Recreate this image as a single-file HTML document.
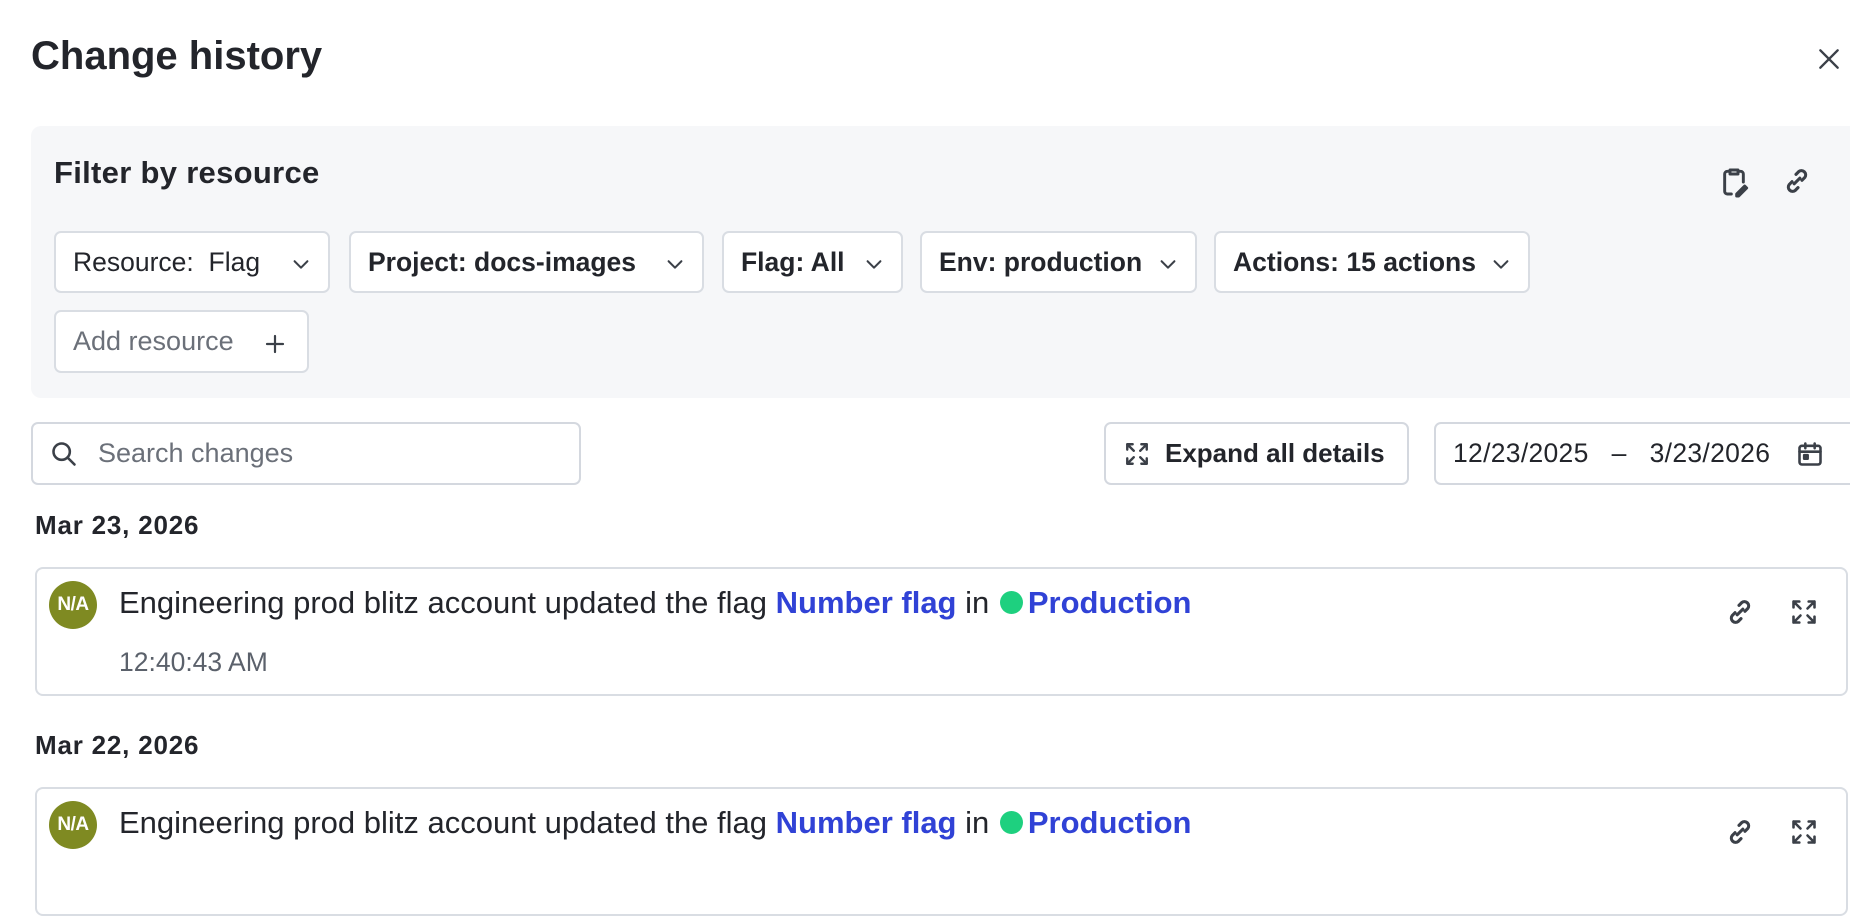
<!DOCTYPE html>
<html><head><meta charset="utf-8"><style>
*{box-sizing:border-box;margin:0;padding:0}
body{width:1850px;height:846px;overflow:hidden;background:#fff;font-family:"Liberation Sans",sans-serif;color:#23252b;position:relative}
.abs{position:absolute}
.title{left:31px;top:34px;font-size:40px;font-weight:600;letter-spacing:0px}
.panel{left:31px;top:126px;width:1840px;height:272px;background:#f6f7f9;border-radius:10px}
.fh{left:54px;top:155px;font-size:31px;font-weight:600;letter-spacing:0.3px}
.chip{position:absolute;top:231px;height:62px;border:2px solid #d9dde3;border-radius:7px;background:#fff;display:flex;align-items:center;padding-left:17px;font-size:26.5px;font-weight:600;color:#23252b}
.chip svg{position:absolute;right:16px;top:20px}
.box{position:absolute;border:2px solid #d4d8df;border-radius:7px;background:#fff;display:flex;align-items:center}
.date{font-size:26px;font-weight:700;left:35px;letter-spacing:0.8px}
.card{position:absolute;left:35px;width:1813px;height:129px;border:2px solid #d9dde3;border-radius:8px;background:#fff}
.av{position:absolute;left:12px;top:12px;width:48px;height:48px;border-radius:50%;background:#7f8a22;color:#fff;font-size:19px;font-weight:700;display:flex;align-items:center;justify-content:center;letter-spacing:-0.5px}
.msg{position:absolute;left:82px;top:16px;font-size:31px;white-space:nowrap}
.msg b{color:#3042d6;font-weight:600}
.dot{display:inline-block;width:23px;height:23px;border-radius:50%;background:#1ed07f;vertical-align:-1px;margin:0 5px 0 2px}
.tm{position:absolute;left:82px;top:78px;font-size:26.5px;color:#5b616b}
.ic{position:absolute;stroke:#3b4048;fill:none;stroke-width:2.2;stroke-linecap:round;stroke-linejoin:round}
</style></head><body>
<div class="abs title">Change history</div>
<svg class="ic" style="left:1816px;top:46px" width="26" height="26" viewBox="0 0 24 24"><path d="M4 4L20 20M20 4L4 20"/></svg>
<div class="abs panel"></div>
<div class="abs fh">Filter by resource</div>
<svg class="ic" style="left:1718px;top:166px" width="32" height="32" viewBox="0 0 24 24"><path d="M9 4H7a2 2 0 0 0-2 2v13a2 2 0 0 0 2 2h3M15 4h2a2 2 0 0 1 2 2v6M9 3h6v3H9zM14 21l6-6 1.5 1.5-6 6H14z"/></svg>
<svg class="ic" style="left:1780px;top:164px" width="34" height="34" viewBox="0 0 24 24"><path d="M10 14l4-4M8.5 12.5l-2 2a3 3 0 0 0 4.2 4.2l2-2M15.5 11.5l2-2a3 3 0 0 0-4.2-4.2l-2 2"/></svg>
<div class="chip" style="left:54px;width:276px;font-weight:400">Resource:&nbsp;&nbsp;Flag<svg class="ic" width="22" height="22" viewBox="0 0 24 24" style="position:absolute"><path d="M5 9l7 7 7-7"/></svg></div>
<div class="chip" style="left:349px;width:355px">Project: docs-images<svg class="ic" width="22" height="22" viewBox="0 0 24 24" style="position:absolute"><path d="M5 9l7 7 7-7"/></svg></div>
<div class="chip" style="left:722px;width:181px">Flag: All<svg class="ic" width="22" height="22" viewBox="0 0 24 24" style="position:absolute"><path d="M5 9l7 7 7-7"/></svg></div>
<div class="chip" style="left:920px;width:277px">Env: production<svg class="ic" width="22" height="22" viewBox="0 0 24 24" style="position:absolute"><path d="M5 9l7 7 7-7"/></svg></div>
<div class="chip" style="left:1214px;width:316px">Actions: 15 actions<svg class="ic" width="22" height="22" viewBox="0 0 24 24" style="position:absolute"><path d="M5 9l7 7 7-7"/></svg></div>
<div class="chip" style="left:54px;top:310px;width:255px;height:63px;font-weight:400;color:#6b7079;font-size:27px">Add resource<svg class="ic" width="24" height="24" viewBox="0 0 24 24" style="position:absolute;right:20px"><path d="M12 4v16M4 12h16"/></svg></div>
<div class="box" style="left:31px;top:422px;width:550px;height:63px;font-size:27px;color:#6b7079;padding-left:65px">Search changes</div>
<svg class="ic" style="left:50px;top:440px" width="28" height="28" viewBox="0 0 24 24"><circle cx="10" cy="10" r="7"/><path d="M15 15l6 6"/></svg>
<div class="box" style="left:1104px;top:422px;width:305px;height:63px;font-size:26px;font-weight:700;padding-left:59px">Expand all details</div>
<svg class="ic" style="left:1124px;top:441px" width="26" height="26" viewBox="0 0 24 24"><path d="M3 8V3h5M3 3l6 6M21 8V3h-5M21 3l-6 6M3 16v5h5M3 21l6-6M21 16v5h-5M21 21l-6-6"/></svg>
<div class="box" style="left:1434px;top:422px;width:430px;height:63px;font-size:26.5px;padding-left:17px;letter-spacing:0.3px">12/23/2025&nbsp;&nbsp;&nbsp;–&nbsp;&nbsp;&nbsp;3/23/2026</div>
<svg class="ic" style="left:1796px;top:440px" width="28" height="28" viewBox="0 0 24 24"><rect x="3" y="5" width="18" height="16" rx="2"/><path d="M3 10h18M8 3v4M16 3v4"/><rect x="7" y="13" width="3" height="3" fill="#3b4048"/></svg>
<div class="abs date" style="top:510px">Mar 23, 2026</div>
<div class="card" style="top:567px"><div class="av">N/A</div><div class="msg">Engineering prod blitz account updated the flag <b>Number flag</b> in <span class="dot"></span><b>Production</b></div><div class="tm">12:40:43 AM</div>
<svg class="ic" style="left:1686px;top:26px" width="34" height="34" viewBox="0 0 24 24"><path d="M10 14l4-4M8.5 12.5l-2 2a3 3 0 0 0 4.2 4.2l2-2M15.5 11.5l2-2a3 3 0 0 0-4.2-4.2l-2 2"/></svg>
<svg class="ic" style="left:1753px;top:29px" width="28" height="28" viewBox="0 0 24 24"><path d="M3 8V3h5M3 3l6 6M21 8V3h-5M21 3l-6 6M3 16v5h5M3 21l6-6M21 16v5h-5M21 21l-6-6"/></svg></div>
<div class="abs date" style="top:730px">Mar 22, 2026</div>
<div class="card" style="top:787px"><div class="av">N/A</div><div class="msg">Engineering prod blitz account updated the flag <b>Number flag</b> in <span class="dot"></span><b>Production</b></div>
<svg class="ic" style="left:1686px;top:26px" width="34" height="34" viewBox="0 0 24 24"><path d="M10 14l4-4M8.5 12.5l-2 2a3 3 0 0 0 4.2 4.2l2-2M15.5 11.5l2-2a3 3 0 0 0-4.2-4.2l-2 2"/></svg>
<svg class="ic" style="left:1753px;top:29px" width="28" height="28" viewBox="0 0 24 24"><path d="M3 8V3h5M3 3l6 6M21 8V3h-5M21 3l-6 6M3 16v5h5M3 21l6-6M21 16v5h-5M21 21l-6-6"/></svg></div>
</body></html>
